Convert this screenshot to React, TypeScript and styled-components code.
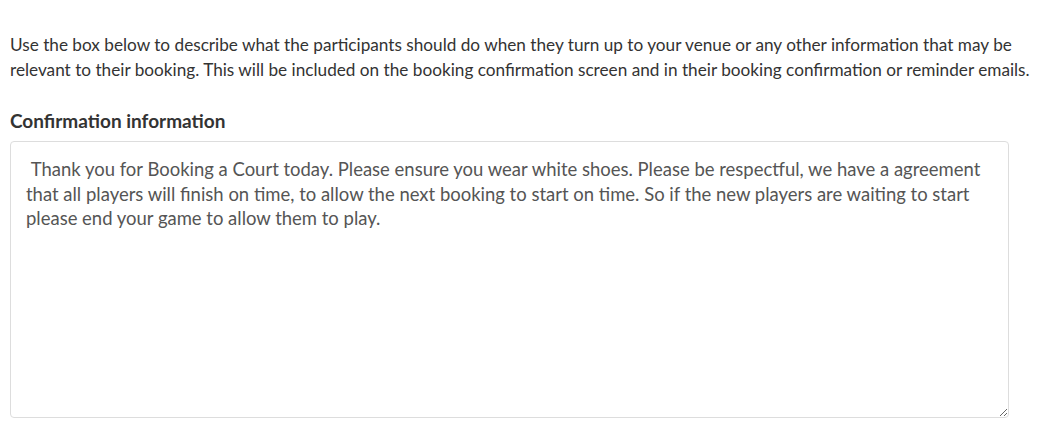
import React from "react";
import styled, { createGlobalStyle } from "styled-components";

const Global = createGlobalStyle`
  html, body { margin: 0; padding: 0; background: #fff; }
  body { font-family: Lato, "Open Sans", sans-serif; }
`;

const Page = styled.div`
  padding: 32px 0 0 10px;
  display: flex;
  flex-direction: column;
`;

const Intro = styled.p`
  margin: 0;
  font-size: 17.2px;
  line-height: 25px;
  color: #333;
`;

const Label = styled.label`
  margin-top: 26px;
  font-size: 19px;
  font-weight: 700;
  line-height: 26px;
  color: #333;
`;

const Area = styled.textarea`
  margin-top: 7px;
  box-sizing: border-box;
  width: 999px;
  height: 277px;
  padding: 15px 15px;
  border: 1px solid #ddd;
  border-radius: 4px;
  font-family: Lato, "Open Sans", sans-serif;
  font-size: 18.48px;
  line-height: 24.5px;
  color: #555;
  resize: vertical;
  outline: none;
`;

const text =
  " Thank you for Booking a Court today. Please ensure you wear white shoes. Please be respectful, we have a agreement that all players will finish on time, to allow the next booking to start on time. So if the new players are waiting to start please end your game to allow them to play.";

export default function App() {
  return (
    <>
      <Global />
      <Page>
        <Intro>
          Use the box below to describe what the participants should do when they turn up to your venue or any other
          information that may be relevant to their booking. This will be included on the booking confirmation screen
          and in their booking confirmation or reminder emails.
        </Intro>
        <Label htmlFor="conf">Confirmation information</Label>
        <Area id="conf" defaultValue={text} />
      </Page>
    </>
  );
}
